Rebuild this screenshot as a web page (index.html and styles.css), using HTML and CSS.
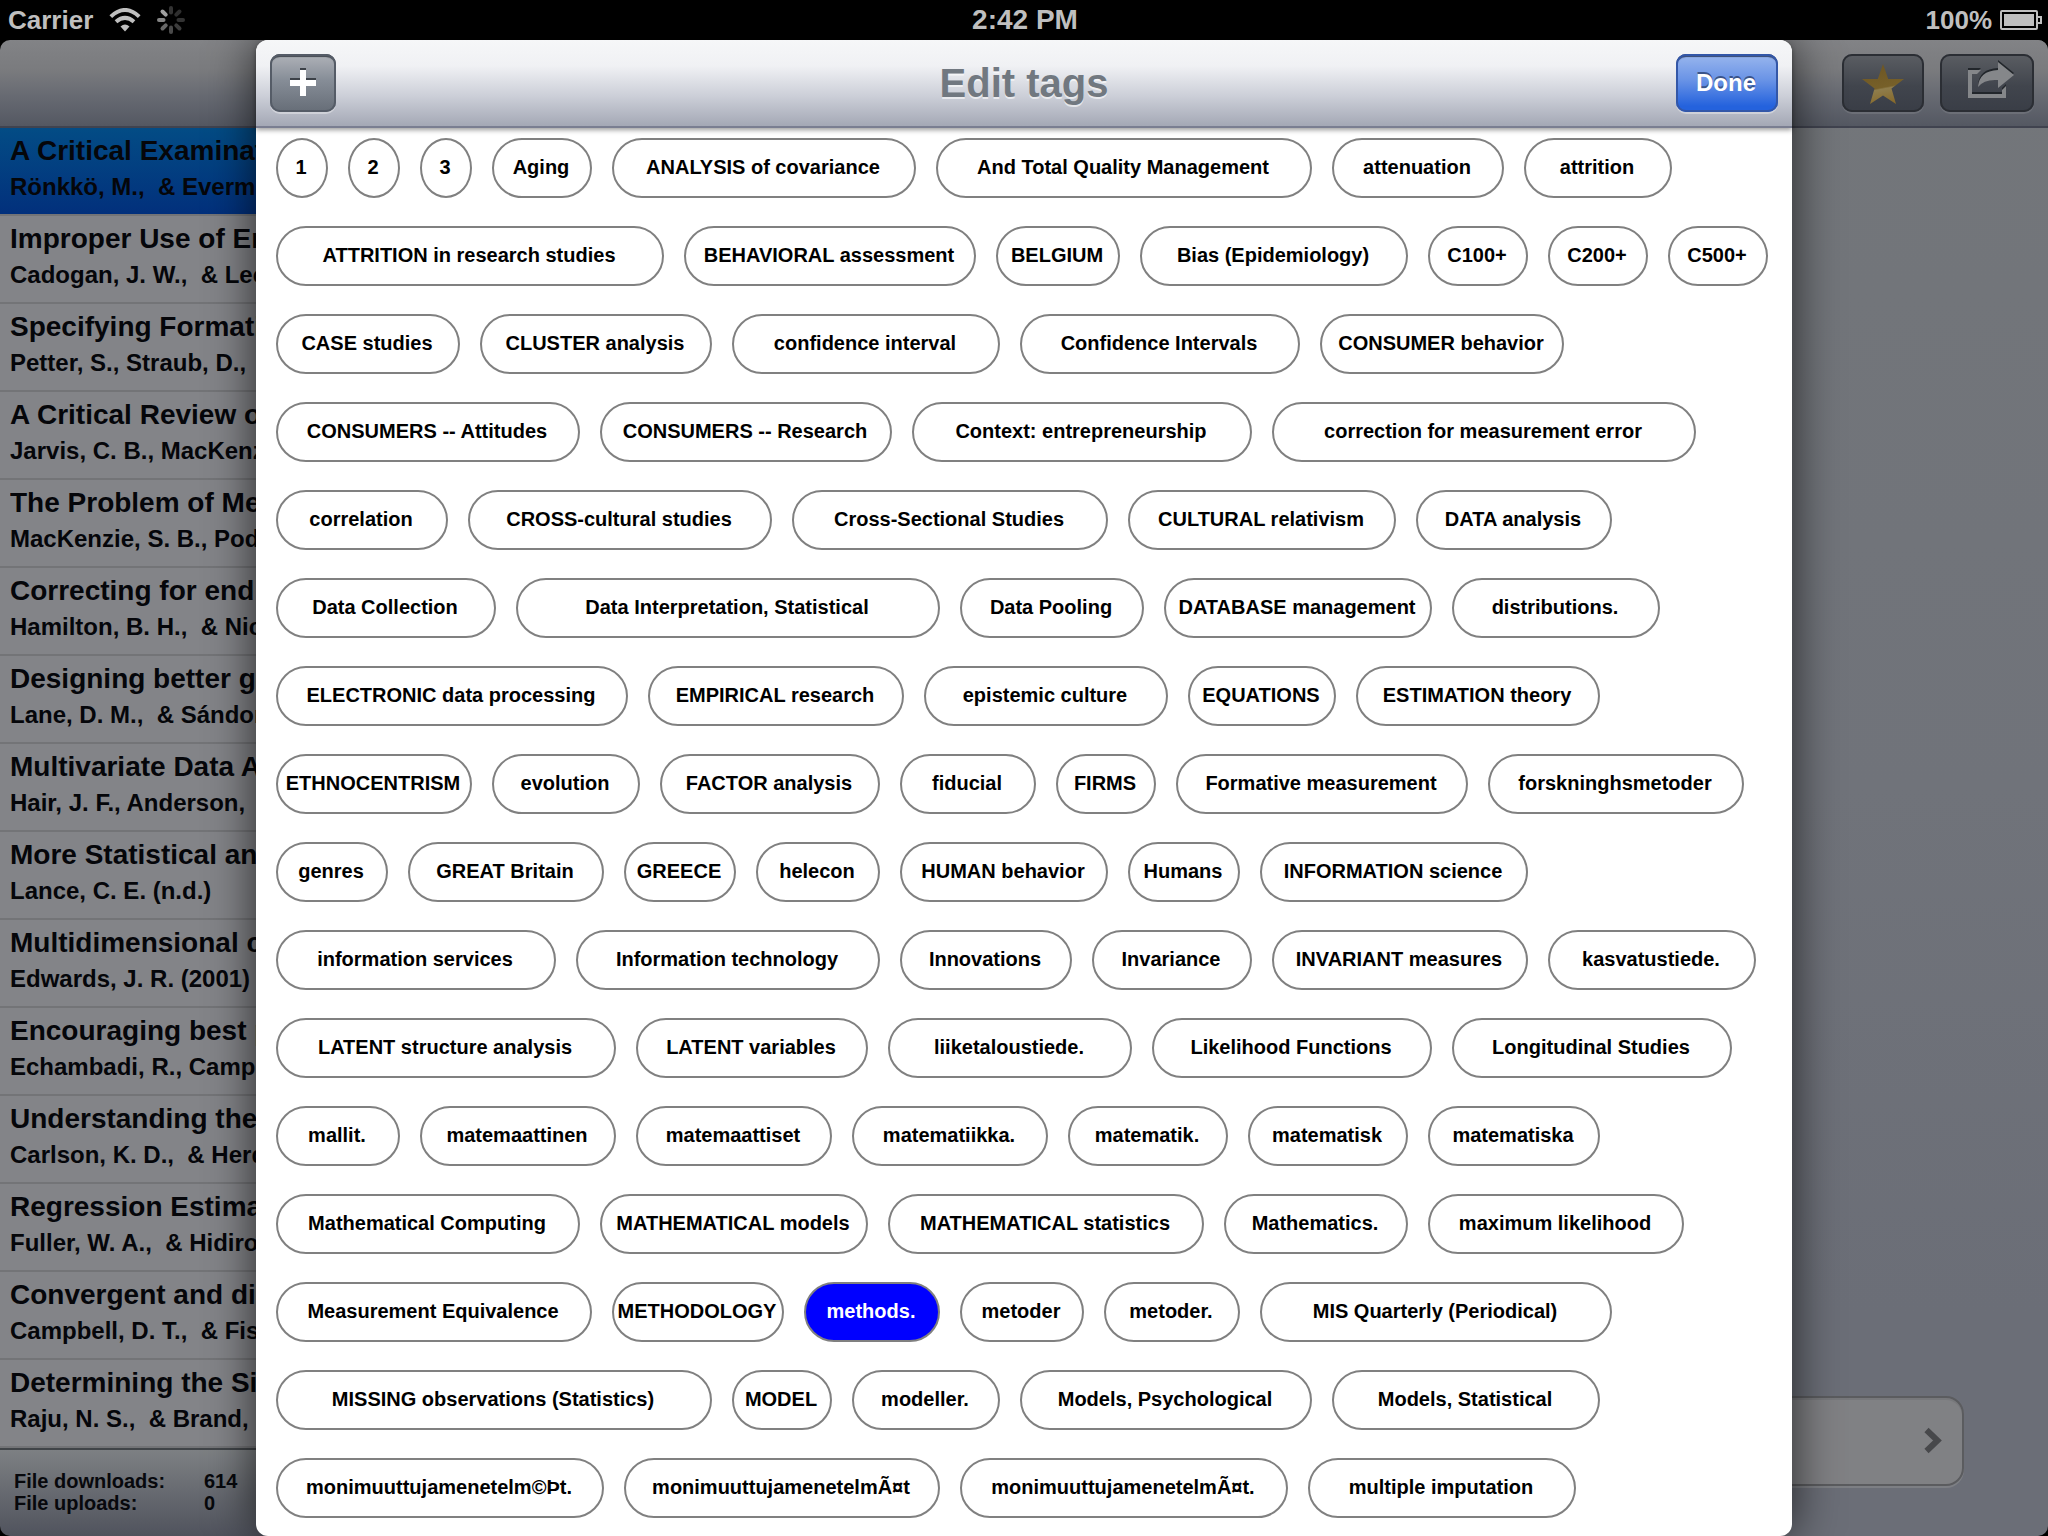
FILE: index.html
```html
<!DOCTYPE html>
<html lang="en">
<head>
<meta charset="utf-8">
<meta name="viewport" content="width=device-width, initial-scale=1">
<title>Edit tags</title>
<link rel="stylesheet" href="styles.css">
</head>
<body>
<div class="app">
  <header class="status">
    <div class="status-left">
      <span>Carrier</span>
      <svg class="wifi" width="32" height="24" viewBox="0 0 32 24" aria-hidden="true">
        <path d="M16 23.500 L11.500 18.500 Q16 14.500 20.500 18.500 Z" fill="#bfbfbf"/>
        <path d="M7 13.800 Q16 6 25 13.800" fill="none" stroke="#bfbfbf" stroke-width="4"/>
        <path d="M1.800 8.600 Q16 -4.600 30.200 8.600" fill="none" stroke="#bfbfbf" stroke-width="4"/>
      </svg>
      <svg class="spinner" width="28" height="28" viewBox="-14 -14 28 28" aria-hidden="true">
        <g stroke-width="4" stroke-linecap="round">
          <path d="M0 -7.500V-12" stroke="#333"/>
          <path d="M5.300 -5.300L8.500 -8.500" stroke="#2e2e2e"/>
          <path d="M7.500 0H12" stroke="#333"/>
          <path d="M5.300 5.300L8.500 8.500" stroke="#3c3c3c"/>
          <path d="M0 7.500V12" stroke="#4a4a4a"/>
          <path d="M-5.300 5.300L-8.500 8.500" stroke="#686868"/>
          <path d="M-7.500 0H-12" stroke="#858585"/>
          <path d="M-5.300 -5.300L-8.500 -8.500" stroke="#a0a0a0"/>
        </g>
      </svg>
    </div>
    <div class="status-time">2:42 PM</div>
    <div class="status-right">
      <span>100%</span>
      <svg width="42" height="20" viewBox="0 0 42 20" aria-hidden="true">
        <rect x="1" y="1" width="36" height="18" rx="1" fill="none" stroke="#bfbfbf" stroke-width="2"/>
        <rect x="4" y="4" width="30" height="12" fill="#bfbfbf"/>
        <path d="M38 7H41V13H38" fill="none" stroke="#bfbfbf" stroke-width="2"/>
      </svg>
    </div>
  </header>

  <div class="split">
    <aside class="master">
      <div class="bar"></div>
      <ul class="articles">
        <li class="article article-selected"><h2>A Critical Examinat</h2><p>Rönkkö, M.,  &amp; Everm</p></li>
        <li class="article"><h2>Improper Use of En</h2><p>Cadogan, J. W.,  &amp; Lee</p></li>
        <li class="article"><h2>Specifying Formati</h2><p>Petter, S., Straub, D.,</p></li>
        <li class="article"><h2>A Critical Review o</h2><p>Jarvis, C. B., MacKenz</p></li>
        <li class="article"><h2>The Problem of Me</h2><p>MacKenzie, S. B., Pod</p></li>
        <li class="article"><h2>Correcting for end</h2><p>Hamilton, B. H.,  &amp; Nic</p></li>
        <li class="article"><h2>Designing better g</h2><p>Lane, D. M.,  &amp; Sándor</p></li>
        <li class="article"><h2>Multivariate Data A</h2><p>Hair, J. F., Anderson,</p></li>
        <li class="article"><h2>More Statistical an</h2><p>Lance, C. E. (n.d.)</p></li>
        <li class="article"><h2>Multidimensional c</h2><p>Edwards, J. R. (2001)</p></li>
        <li class="article"><h2>Encouraging best p</h2><p>Echambadi, R., Camp</p></li>
        <li class="article"><h2>Understanding the</h2><p>Carlson, K. D.,  &amp; Herd</p></li>
        <li class="article"><h2>Regression Estima</h2><p>Fuller, W. A.,  &amp; Hidiro</p></li>
        <li class="article"><h2>Convergent and di</h2><p>Campbell, D. T.,  &amp; Fis</p></li>
        <li class="article"><h2>Determining the Si</h2><p>Raju, N. S.,  &amp; Brand, P</p></li>
      </ul>
      <dl class="transfers">
        <dt>File downloads:</dt><dd>614</dd>
        <dt>File uploads:</dt><dd>0</dd>
      </dl>
    </aside>

    <main class="detail">
      <div class="bar bar-detail">
        <button class="bar-button bar-button-star" type="button" aria-label="Favorite">
          <svg width="82" height="58" viewBox="0 0 82 58" aria-hidden="true">
            <defs>
              <linearGradient id="gold" x1="0.400" y1="0" x2="0.600" y2="1">
                <stop offset="0" stop-color="#6d5624"/>
                <stop offset="0.580" stop-color="#776029"/>
                <stop offset="0.620" stop-color="#8f7d4c"/>
                <stop offset="1" stop-color="#86692a"/>
              </linearGradient>
            </defs>
            <path d="M41 10L46.200 25H62L49.500 34.500L54 50L41 41.500L28 50L32.500 34.500L20 25H35.800Z" fill="url(#gold)"/>
          </svg>
        </button>
        <button class="bar-button bar-button-share" type="button" aria-label="Share">
          <svg width="94" height="58" viewBox="0 0 94 58" aria-hidden="true">
            <defs>
              <g id="share">
                <path d="M28 16H41L37 20H32V40H62V36L66 32V44H28Z"/>
                <path d="M58 8L74 21L58 34V26Q44 25 38 33Q39 17 58 16Z"/>
              </g>
            </defs>
            <use href="#share" y="-2" fill="#22262b"/>
            <use href="#share" fill="#85878a"/>
          </svg>
        </button>
      </div>
      <button class="next-cell" type="button" aria-label="Open details">
        <svg width="18" height="28" viewBox="0 0 18 28" aria-hidden="true">
          <path d="M2.500 3L13.500 13.500L2.500 24" fill="none" stroke="#47484b" stroke-width="6"/>
        </svg>
      </button>
    </main>
  </div>

  <section class="modal" role="dialog" aria-labelledby="modal-title">
    <header class="modal-bar">
      <button class="add-button" type="button" aria-label="Add tag">
        <svg width="26" height="28" viewBox="0 0 26 28" aria-hidden="true">
          <path d="M10 0H16V10H26V16H16V26H10V16H0V10H10Z" fill="#3c4148"/>
          <path d="M10 2H16V12H26V18H16V28H10V18H0V12H10Z" fill="#fff"/>
        </svg>
      </button>
      <h1 id="modal-title">Edit tags</h1>
      <button class="done-button" type="button">Done</button>
    </header>
    <div class="tags">
      <button type="button" class="tag tag-round" style="--chars:1">1</button>
      <button type="button" class="tag tag-round" style="--chars:1">2</button>
      <button type="button" class="tag tag-round" style="--chars:1">3</button>
      <button type="button" class="tag" style="--chars:5">Aging</button>
      <button type="button" class="tag" style="--chars:22">ANALYSIS of covariance</button>
      <button type="button" class="tag" style="--chars:28">And Total Quality Management</button>
      <button type="button" class="tag" style="--chars:11">attenuation</button>
      <button type="button" class="tag" style="--chars:9">attrition</button>
      <button type="button" class="tag" style="--chars:29">ATTRITION in research studies</button>
      <button type="button" class="tag" style="--chars:21">BEHAVIORAL assessment</button>
      <button type="button" class="tag" style="--chars:7">BELGIUM</button>
      <button type="button" class="tag" style="--chars:19">Bias (Epidemiology)</button>
      <button type="button" class="tag" style="--chars:5">C100+</button>
      <button type="button" class="tag" style="--chars:5">C200+</button>
      <button type="button" class="tag" style="--chars:5">C500+</button>
      <button type="button" class="tag" style="--chars:12">CASE studies</button>
      <button type="button" class="tag" style="--chars:16">CLUSTER analysis</button>
      <button type="button" class="tag" style="--chars:19">confidence interval</button>
      <button type="button" class="tag" style="--chars:20">Confidence Intervals</button>
      <button type="button" class="tag" style="--chars:17">CONSUMER behavior</button>
      <button type="button" class="tag" style="--chars:22">CONSUMERS -- Attitudes</button>
      <button type="button" class="tag" style="--chars:21">CONSUMERS -- Research</button>
      <button type="button" class="tag" style="--chars:25">Context: entrepreneurship</button>
      <button type="button" class="tag" style="--chars:32">correction for measurement error</button>
      <button type="button" class="tag" style="--chars:11">correlation</button>
      <button type="button" class="tag" style="--chars:22">CROSS-cultural studies</button>
      <button type="button" class="tag" style="--chars:23">Cross-Sectional Studies</button>
      <button type="button" class="tag" style="--chars:19">CULTURAL relativism</button>
      <button type="button" class="tag" style="--chars:13">DATA analysis</button>
      <button type="button" class="tag" style="--chars:15">Data Collection</button>
      <button type="button" class="tag" style="--chars:32">Data Interpretation, Statistical</button>
      <button type="button" class="tag" style="--chars:12">Data Pooling</button>
      <button type="button" class="tag" style="--chars:19">DATABASE management</button>
      <button type="button" class="tag" style="--chars:14">distributions.</button>
      <button type="button" class="tag" style="--chars:26">ELECTRONIC data processing</button>
      <button type="button" class="tag" style="--chars:18">EMPIRICAL research</button>
      <button type="button" class="tag" style="--chars:17">epistemic culture</button>
      <button type="button" class="tag" style="--chars:9">EQUATIONS</button>
      <button type="button" class="tag" style="--chars:17">ESTIMATION theory</button>
      <button type="button" class="tag" style="--chars:13">ETHNOCENTRISM</button>
      <button type="button" class="tag" style="--chars:9">evolution</button>
      <button type="button" class="tag" style="--chars:15">FACTOR analysis</button>
      <button type="button" class="tag" style="--chars:8">fiducial</button>
      <button type="button" class="tag" style="--chars:5">FIRMS</button>
      <button type="button" class="tag" style="--chars:21">Formative measurement</button>
      <button type="button" class="tag" style="--chars:18">forskninghsmetoder</button>
      <button type="button" class="tag" style="--chars:6">genres</button>
      <button type="button" class="tag" style="--chars:13">GREAT Britain</button>
      <button type="button" class="tag" style="--chars:6">GREECE</button>
      <button type="button" class="tag" style="--chars:7">helecon</button>
      <button type="button" class="tag" style="--chars:14">HUMAN behavior</button>
      <button type="button" class="tag" style="--chars:6">Humans</button>
      <button type="button" class="tag" style="--chars:19">INFORMATION science</button>
      <button type="button" class="tag" style="--chars:20">information services</button>
      <button type="button" class="tag" style="--chars:22">Information technology</button>
      <button type="button" class="tag" style="--chars:11">Innovations</button>
      <button type="button" class="tag" style="--chars:10">Invariance</button>
      <button type="button" class="tag" style="--chars:18">INVARIANT measures</button>
      <button type="button" class="tag" style="--chars:14">kasvatustiede.</button>
      <button type="button" class="tag" style="--chars:25">LATENT structure analysis</button>
      <button type="button" class="tag" style="--chars:16">LATENT variables</button>
      <button type="button" class="tag" style="--chars:17">liiketaloustiede.</button>
      <button type="button" class="tag" style="--chars:20">Likelihood Functions</button>
      <button type="button" class="tag" style="--chars:20">Longitudinal Studies</button>
      <button type="button" class="tag" style="--chars:7">mallit.</button>
      <button type="button" class="tag" style="--chars:13">matemaattinen</button>
      <button type="button" class="tag" style="--chars:13">matemaattiset</button>
      <button type="button" class="tag" style="--chars:13">matematiikka.</button>
      <button type="button" class="tag" style="--chars:10">matematik.</button>
      <button type="button" class="tag" style="--chars:10">matematisk</button>
      <button type="button" class="tag" style="--chars:11">matematiska</button>
      <button type="button" class="tag" style="--chars:22">Mathematical Computing</button>
      <button type="button" class="tag" style="--chars:19">MATHEMATICAL models</button>
      <button type="button" class="tag" style="--chars:23">MATHEMATICAL statistics</button>
      <button type="button" class="tag" style="--chars:12">Mathematics.</button>
      <button type="button" class="tag" style="--chars:18">maximum likelihood</button>
      <button type="button" class="tag" style="--chars:23">Measurement Equivalence</button>
      <button type="button" class="tag" style="--chars:11">METHODOLOGY</button>
      <button type="button" class="tag tag-selected" aria-pressed="true" style="--chars:8">methods.</button>
      <button type="button" class="tag" style="--chars:7">metoder</button>
      <button type="button" class="tag" style="--chars:8">metoder.</button>
      <button type="button" class="tag" style="--chars:26">MIS Quarterly (Periodical)</button>
      <button type="button" class="tag" style="--chars:33">MISSING observations (Statistics)</button>
      <button type="button" class="tag" style="--chars:5">MODEL</button>
      <button type="button" class="tag" style="--chars:9">modeller.</button>
      <button type="button" class="tag" style="--chars:21">Models, Psychological</button>
      <button type="button" class="tag" style="--chars:19">Models, Statistical</button>
      <button type="button" class="tag" style="--chars:24">monimuuttujamenetelm©Þt.</button>
      <button type="button" class="tag" style="--chars:23">monimuuttujamenetelmÃ¤t</button>
      <button type="button" class="tag" style="--chars:24">monimuuttujamenetelmÃ¤t.</button>
      <button type="button" class="tag" style="--chars:19">multiple imputation</button>
    </div>
  </section>
</div>
</body>
</html>
```

FILE: styles.css
```css
* { box-sizing: border-box; }

body, h1, h2, p, ul, dl, dd { margin: 0; padding: 0; }

body {
  background: #000;
  font-family: "Liberation Sans", Arial, sans-serif;
  font-weight: bold;
}

button {
  font: inherit;
  margin: 0;
  padding: 0;
}

svg { display: block; flex: none; }

.app {
  position: relative;
  display: flex;
  flex-direction: column;
  min-height: 100vh;
  overflow: hidden;
}

/* Status bar */
.status {
  display: grid;
  grid-template-columns: 1fr auto 1fr;
  align-items: center;
  height: 40px;
  padding: 0 6px 0 8px;
  color: #bfbfbf;
  font-size: 26px;
  line-height: 40px;
}

.status-left, .status-right {
  display: flex;
  align-items: center;
}

.status-left { gap: 16px; }
.status-right { gap: 8px; justify-content: flex-end; }
.status-time { font-size: 28px; }

/* Dimmed content behind the dialog */
.split {
  flex: 1;
  display: grid;
  grid-template-columns: 5fr 11fr;
  border-radius: 10px;
  overflow: hidden;
}

.master, .detail {
  display: flex;
  flex-direction: column;
  min-width: 0;
}

.bar {
  height: 88px;
  border-bottom: 2px solid #40434f;
  background: linear-gradient(#828386, #7a7b7e 35%, #676a72 65%, #545862);
}

.bar-detail {
  display: flex;
  justify-content: flex-end;
  align-items: flex-start;
  gap: 16px;
  padding: 14px 14px 0 0;
}

.bar-button {
  height: 58px;
  border: 0;
  border-radius: 10px;
  background: linear-gradient(#5b5e63, #41454d 55%, #393d46);
  box-shadow: inset 0 0 0 2px #2b2e34, 0 2px 0 #6c6f77;
}

.bar-button-star { width: 82px; }
.bar-button-share { width: 94px; }

.articles {
  flex: 1;
  list-style: none;
  background: #838488;
}

.article {
  height: 88px;
  padding: 5px 10px 0;
  border-bottom: 2px solid #737477;
  color: #05060a;
  white-space: pre;
}

.article-selected { background: linear-gradient(#034c85, #02307c); }

/* The text stops where the dialog begins */
.article h2, .article p {
  width: calc(12.5vw - 10px);
  overflow: hidden;
  line-height: 36px;
}

.article h2 { font-size: 28px; }
.article p { font-size: 24px; }

.transfers {
  display: grid;
  grid-template-columns: 190px 1fr;
  align-content: start;
  height: 88px;
  padding: 20px 14px 0;
  border-top: 2px solid #404448;
  background: linear-gradient(#7d8083, #50535d);
  color: #07080c;
  font-size: 20px;
  line-height: 22px;
}

.detail {
  justify-content: space-between;
  background: linear-gradient(#73767a, #70737a 50%, #6b6e77 85%);
}

.next-cell {
  display: flex;
  justify-content: flex-end;
  align-items: center;
  height: 90px;
  margin: 0 84px 50px 84px;
  padding-right: 20px;
  border: 2px solid #5b5c5f;
  border-radius: 18px;
  background: #808184;
  box-shadow: inset 0 2px 0 #77787b, 0 2px 0 #7d7f84;
}

/* Dialog */
.modal {
  position: absolute;
  inset: 40px 12.5% 0;
  border-radius: 12px;
  background: #fff;
  box-shadow: 0 0 48px rgba(0, 0, 0, 0.7);
  clip-path: inset(0 -80px);
}

.modal-bar {
  display: grid;
  grid-template-columns: 1fr auto 1fr;
  align-items: center;
  height: 88px;
  padding: 0 14px;
  border-bottom: 2px solid #7a7e91;
  border-radius: 12px 12px 0 0;
  background: linear-gradient(#f6f7f8, #f0f1f4 30%, #cccfd8 65%, #a4a8b5);
  box-shadow: 0 2px 5px rgba(0, 0, 0, 0.4);
}

.modal-bar h1 {
  color: #717880;
  font-size: 40px;
  line-height: 48px;
  text-shadow: 0 2px 0 rgba(255, 255, 255, 0.6);
}

.add-button, .done-button {
  height: 58px;
  border: 0;
  border-radius: 10px;
}

.add-button {
  display: flex;
  justify-content: center;
  align-items: center;
  width: 66px;
  padding-bottom: 2px;
  background: linear-gradient(#b0b3b9, #868d97 45%, #666d77);
  box-shadow: inset 0 0 0 2px #555c67, inset 0 3px 1px #41464e, 0 2px 0 #cfd1d8;
}

.done-button {
  justify-self: end;
  width: 102px;
  padding-right: 2px;
  background: linear-gradient(#9ab7ee, #6993e6 45%, #2462dd 90%);
  box-shadow: inset 0 0 0 2px #3357a8, inset 0 3px 1px #33466f, 0 2px 0 #cfd1d8;
  color: #fff;
  font-size: 24px;
  text-shadow: 0 -2px 0 #3a5489;
}

.tags {
  display: flex;
  flex-wrap: wrap;
  gap: 28px 20px;
  padding: 10px 20px 18px;
}

/* Each pill is sized from the length of its name */
.tag {
  width: calc(var(--chars) * 12px + 40px);
  padding: 15px 2px 17px 0;
  border: 2px solid #808080;
  border-radius: 30px;
  background: #fff;
  color: #000;
  font-size: 20px;
  line-height: 24px;
  white-space: nowrap;
}

.tag-round { border-radius: 50%; }
.tag-selected { background: #00f; color: #fff; }
```
